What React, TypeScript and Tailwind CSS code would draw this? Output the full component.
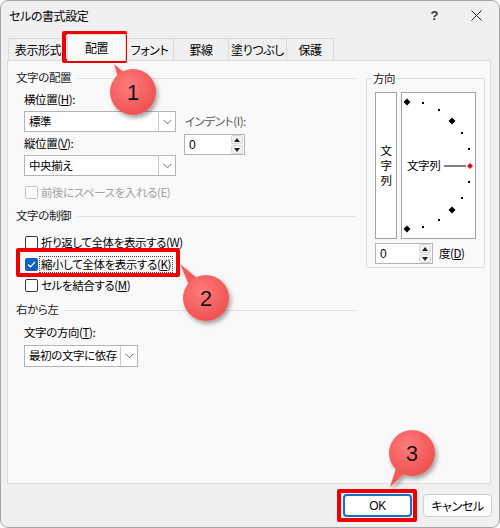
import React from "react";

type CheckProps = {
    label: React.ReactNode;
    checked?: boolean;
    disabled?: boolean;
    focus?: boolean;
    className?: string;
};

const Chevron = () => (
    <svg width="9" height="6" viewBox="0 0 9 6">
        <path d="M0.5 0.8 4.5 4.8 8.5 0.8" fill="none" stroke="#666" strokeWidth="1" />
    </svg>
);

const Select = ({ value, className = "" }: { value: string; className?: string }) => (
    <div className={`flex items-stretch border border-[#b4b4b4] bg-white ${className}`}>
        <span className="flex flex-1 items-center whitespace-nowrap pl-[4px]">{value}</span>
        <span className="flex w-[17px] shrink-0 items-center justify-center border-l border-[#c8c8c8]">
            <Chevron />
        </span>
    </div>
);

const SpinBtn = ({ up }: { up?: boolean }) => (
    <div className="flex h-[9px] w-[12px] items-center justify-center rounded-[2px] border border-[#d6d6d6] bg-[#f3f3f3]">
        <svg width="6" height="4" viewBox="0 0 6 4">
            <path d={up ? "M0 4 3 0 6 4Z" : "M0 0 3 4 6 0Z"} fill="#222" />
        </svg>
    </div>
);

const Spin = ({ className = "" }: { className?: string }) => (
    <div className={`flex h-[21px] items-center border border-[#b4b4b4] bg-white ${className}`}>
        <span className="flex-1 pl-[4px] font-['Liberation_Sans',sans-serif] text-[12px]">0</span>
        <div className="mr-[1px] flex flex-col gap-[1px]">
            <SpinBtn up />
            <SpinBtn />
        </div>
    </div>
);

const Check = ({ label, checked, disabled, focus, className = "" }: CheckProps) => (
    <div className={`flex h-[16px] items-center pl-[9px] ${className}`}>
        {checked ? (
            <span className="flex h-[13px] w-[13px] items-center justify-center rounded-[2px] bg-[#0f62c4]">
                <svg width="9" height="7" viewBox="0 0 9 7">
                    <path d="M1 3.5 3.4 5.8 8 1" fill="none" stroke="#fff" strokeWidth="1.2" />
                </svg>
            </span>
        ) : (
            <span
                className={`h-[13px] w-[13px] rounded-[2px] border bg-white ${
                    disabled ? "border-[#c4c4c4]" : "border-[#3a3a3a]"
                }`}
            />
        )}
        <span
            className={`ml-[1px] whitespace-nowrap px-[1px] leading-[15px] ${disabled ? "text-[#a2a2a2]" : "text-black"} ${
                focus ? "border border-dotted border-[#444]" : "border border-transparent"
            }`}
        >
            {label}
        </span>
    </div>
);

const Header = ({ text, className = "" }: { text: string; className?: string }) => (
    <div className={`flex h-[16px] items-center ${className}`}>
        <span className="text-[#222]">{text}</span>
        <div className="ml-[6px] h-px flex-1 bg-[#e2e2e2]" />
    </div>
);

const Tab = ({ label, className = "" }: { label: string; className?: string }) => (
    <div
        className={`-ml-px flex h-[22px] items-center justify-center border border-b-0 border-[#d9d9d9] bg-[#f0f0f0] ${className}`}
    >
        {label}
    </div>
);

// dots around the orientation half circle, relative to the box
const BIG: [number, number][] = [
    [5, 9],
    [50, 28],
    [50, 117],
    [5, 136],
];
const SMALL: [number, number][] = [
    [21, 10],
    [37, 17],
    [60, 40],
    [67, 56],
    [67, 89],
    [60, 105],
    [37, 127],
    [21, 134],
];

const Dial = () => (
    <svg className="pointer-events-none absolute inset-0" width="73" height="145" viewBox="0 0 73 145">
        {BIG.map(([x, y]) => (
            <path key={`${x}-${y}`} d={`M${x} ${y - 3.5}L${x + 3.5} ${y}L${x} ${y + 3.5}L${x - 3.5} ${y}Z`} fill="#000" />
        ))}
        {SMALL.map(([x, y]) => (
            <rect key={`${x}-${y}`} x={x - 1} y={y - 1} width="2" height="2" fill="#000" />
        ))}
        <line x1="42" y1="73" x2="64" y2="73" stroke="#000" strokeWidth="1" />
        <path d="M68 70 71 73 68 76 65 73Z" fill="#e01010" />
    </svg>
);

const Bubble = ({ cx, cy, tip, base, n }: { cx: number; cy: number; tip: string; base: string; n: string }) => (
    <g filter="url(#shadow)">
        <polygon points={`${tip} ${base}`} fill="#f45a5a" />
        <circle cx={cx} cy={cy} r="23" fill="url(#bub)" />
        <text
            x={cx}
            y={cy + 8}
            textAnchor="middle"
            fontFamily="Liberation Sans, sans-serif"
            fontSize="22"
            fill="#111"
        >
            {n}
        </text>
    </g>
);

export default function App() {
    return (
        <div className="relative h-[528px] w-[500px] bg-white font-['Noto_Sans_CJK_JP',sans-serif] text-[11.5px] tracking-[-0.4px] text-black [font-feature-settings:'palt']">
            <div className="flex h-[528px] w-[500px] flex-col overflow-hidden rounded-[8px] border border-[#a5a5a5] bg-[#f0f0f0]">
                {/* title bar */}
                <div className="flex h-[29px] items-center pl-[8px] text-[12px]">
                    <span>セルの書式設定</span>
                    <span className="ml-auto font-['Liberation_Sans',sans-serif] text-[13px] font-bold text-[#333]">?</span>
                    <span className="ml-[33px] mr-[17px] flex">
                        <svg width="11" height="11" viewBox="0 0 11 11">
                            <path d="M0.5 0.5 10.5 10.5M10.5 0.5 0.5 10.5" stroke="#222" strokeWidth="1" />
                        </svg>
                    </span>
                </div>

                {/* tabs */}
                <div className="flex h-[30px] items-end pl-[8px] text-[12px]">
                    <Tab label="表示形式" className="w-[60px]" />
                    <div className="relative z-10 -mb-px -ml-px flex h-[27px] w-[59px] items-center justify-center border border-b-0 border-[#d9d9d9] bg-[#f9f9f9]">
                        配置
                    </div>
                    <Tab label="フォント" className="w-[49px]" />
                    <Tab label="罫線" className="w-[56px]" />
                    <Tab label="塗りつぶし" className="w-[59px]" />
                    <Tab label="保護" className="w-[48px]" />
                </div>

                {/* panel */}
                <div className="ml-[6px] flex h-[424px] w-[484px] border border-[#dcdcdc] bg-[#f9f9f9] pl-[8px]">
                    <div className="flex w-[341px] flex-col">
                        <Header text="文字の配置" className="mt-[9px]" />
                        <div className="mt-[6px] flex pl-[8px]">
                            <div className="flex w-[152px] flex-col">
                                <div className="flex h-[16px] items-center">
                                    横位置(<u>H</u>):
                                </div>
                                <Select value="標準" className="mt-[3px] h-[21px]" />
                                <div className="mt-[4px] flex h-[16px] items-center">
                                    縦位置(<u>V</u>):
                                </div>
                                <Select value="中央揃え" className="mt-[3px] h-[21px]" />
                            </div>
                            <div className="ml-[8px] flex flex-col">
                                <div className="mt-[22px] flex h-[16px] items-center pl-[1px] text-[#555]">
                                    インデント(I):
                                </div>
                                <Spin className="mt-[4px] w-[61px]" />
                            </div>
                        </div>
                        <Check className="mt-[8px]" disabled label="前後にスペースを入れる(E)" />
                        <Header text="文字の制御" className="mt-[8px]" />
                        <Check
                            className="mt-[10px]"
                            label={
                                <>
                                    折り返して全体を表示する(<u>W</u>)
                                </>
                            }
                        />
                        <Check
                            className="mt-[6px]"
                            checked
                            focus
                            label={
                                <>
                                    縮小して全体を表示する(<u>K</u>)
                                </>
                            }
                        />
                        <Check
                            className="mt-[5px]"
                            label={
                                <>
                                    セルを結合する(<u>M</u>)
                                </>
                            }
                        />
                        <Header text="右から左" className="mt-[9px]" />
                        <div className="mt-[7px] flex h-[16px] items-center pl-[8px]">
                            文字の方向(<u>T</u>):
                        </div>
                        <Select value="最初の文字に依存" className="ml-[8px] mt-[4px] h-[22px] w-[114px]" />
                    </div>

                    {/* orientation */}
                    <fieldset className="ml-[9px] mt-[9px] h-[198px] w-[117px] rounded-[2px] border border-[#dcdcdc] px-[8px]">
                        <legend className="-ml-[3px] h-[16px] px-[1px] leading-[16px] text-[#222]">方向</legend>
                        <div className="mt-[6px] flex h-[147px] gap-[4px]">
                            <div className="flex w-[22px] flex-col items-center justify-center border border-[#a4a4a4] bg-white leading-[15px]">
                                <span>文</span>
                                <span>字</span>
                                <span>列</span>
                            </div>
                            <div className="relative flex w-[75px] items-center border border-[#a4a4a4] bg-white pl-[5px]">
                                <span>文字列</span>
                                <Dial />
                            </div>
                        </div>
                        <div className="mt-[4px] flex items-center">
                            <Spin className="w-[58px]" />
                            <span className="ml-[6px]">
                                度(<u>D</u>)
                            </span>
                        </div>
                    </fieldset>
                </div>

                {/* buttons */}
                <div className="mt-[10px] flex justify-end gap-[11px] pr-[7px]">
                    <button className="flex h-[23px] w-[69px] items-center justify-center rounded-[4px] border-2 border-[#1a6fc4] bg-white font-['Liberation_Sans',sans-serif] text-[12px]">
                        OK
                    </button>
                    <button className="flex h-[23px] w-[69px] items-center justify-center rounded-[4px] border border-[#cdcdcd] bg-white text-[12px]">
                        キャンセル
                    </button>
                </div>
            </div>

            {/* annotation callouts */}
            <div className="pointer-events-none absolute left-[62px] top-[31px] h-[32px] w-[65px] rounded-[2px] border-4 border-[#f00000]" />
            <div className="pointer-events-none absolute left-[16px] top-[248px] h-[29px] w-[164px] rounded-[2px] border-4 border-[#f00000]" />
            <div className="pointer-events-none absolute left-[337px] top-[489px] h-[33px] w-[80px] rounded-[2px] border-4 border-[#f00000]" />
            <svg className="pointer-events-none absolute left-0 top-0" width="500" height="528" viewBox="0 0 500 528">
                <defs>
                    <radialGradient id="bub" cx="0.4" cy="0.35" r="0.7">
                        <stop offset="0" stopColor="#ff7b7b" />
                        <stop offset="1" stopColor="#ef4f4f" />
                    </radialGradient>
                    <filter id="shadow" x="-30%" y="-30%" width="160%" height="160%">
                        <feDropShadow dx="2" dy="3" stdDeviation="2" floodColor="#000" floodOpacity="0.35" />
                    </filter>
                </defs>
                <Bubble cx={133} cy={92} tip="114,64" base="142,88 125,99" n="1" />
                <Bubble cx={206} cy={298} tip="180,264" base="215,293 198,305" n="2" />
                <Bubble cx={412} cy={453} tip="390,487" base="420,459 403,447" n="3" />
            </svg>
        </div>
    );
}
